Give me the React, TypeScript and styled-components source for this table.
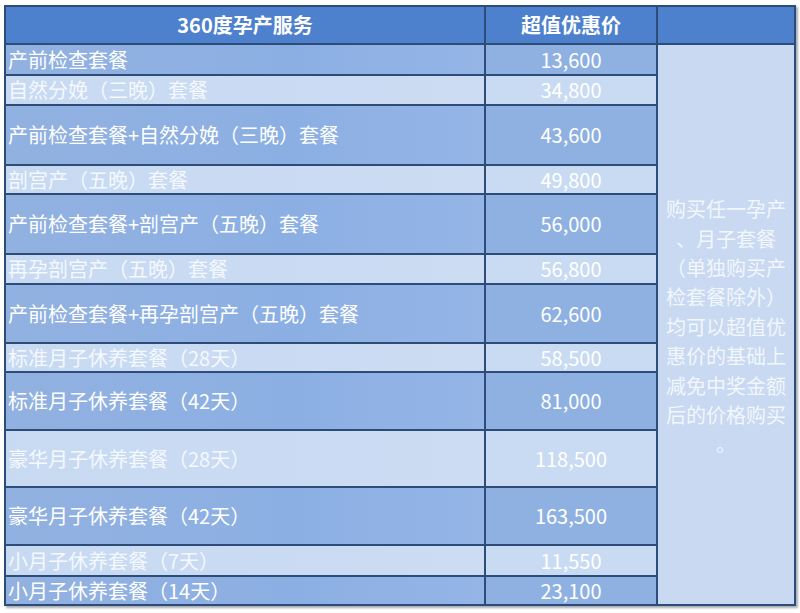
import React from "react";
import styled, { createGlobalStyle } from "styled-components";

const GlobalStyle = createGlobalStyle`
  html, body {
    margin: 0;
    padding: 0;
    background: #ffffff;
  }
  body {
    font-family: "Noto Sans CJK SC", "Noto Sans", sans-serif;
  }
`;

const Page = styled.div`
  width: 800px;
  height: 613px;
  padding: 5px 0 0 4px;
  box-sizing: border-box;
  background: #ffffff;
`;

const Table = styled.table`
  width: 790px;
  table-layout: fixed;
  border-collapse: collapse;
  border: 2px solid #2d4c78;
  box-shadow: 2px 2px 2px rgba(60, 70, 90, 0.45);
`;

const HeadRow = styled.tr`
  height: 38px;
  background: #4d81cd;
`;

const HeadCell = styled.th`
  border: 2px solid #2d4c78;
  color: #ffffff;
  font-size: 20px;
  font-weight: 700;
  text-align: center;
  padding: 0;
  line-height: 1;
`;

const Row = styled.tr<{ $dark: boolean; $h: number }>`
  height: ${(p) => p.$h}px;
  background: ${(p) => (p.$dark ? "#8fb1e2" : "#c9dbf2")};
`;

const NameCell = styled.td<{ $dark: boolean }>`
  border: 2px solid #2d4c78;
  color: ${(p) => (p.$dark ? "#ffffff" : "#f4f8ff")};
  font-size: 20px;
  padding: 0 0 0 2px;
  white-space: nowrap;
  line-height: 1;
  background: ${(p) =>
    p.$dark
      ? "linear-gradient(90deg, #91b1e0 0%, #8cafe3 60%, #94b5e6 100%)"
      : "linear-gradient(90deg, #c8daf2 0%, #cbdcf3 100%)"};
`;

const PriceCell = styled.td`
  border: 2px solid #2d4c78;
  color: #ffffff;
  font-size: 20px;
  text-align: center;
  padding: 0;
  line-height: 1;
`;

const NoteCell = styled.td`
  border: 2px solid #2d4c78;
  background: #c8d9f1;
  color: #f2f6fd;
  font-size: 20px;
  text-align: center;
  vertical-align: middle;
  padding: 4px 0 0 0;
`;

const NoteLine = styled.div`
  line-height: 29.4px;
  white-space: nowrap;
`;

const rows = [
  { name: "产前检查套餐", price: "13,600", h: 31 },
  { name: "自然分娩（三晚）套餐", price: "34,800", h: 30 },
  { name: "产前检查套餐+自然分娩（三晚）套餐", price: "43,600", h: 60 },
  { name: "剖宫产（五晚）套餐", price: "49,800", h: 29 },
  { name: "产前检查套餐+剖宫产（五晚）套餐", price: "56,000", h: 60 },
  { name: "再孕剖宫产（五晚）套餐", price: "56,800", h: 30 },
  { name: "产前检查套餐+再孕剖宫产（五晚）套餐", price: "62,600", h: 59 },
  { name: "标准月子休养套餐（28天）", price: "58,500", h: 29 },
  { name: "标准月子休养套餐（42天）", price: "81,000", h: 58 },
  { name: "豪华月子休养套餐（28天）", price: "118,500", h: 57 },
  { name: "豪华月子休养套餐（42天）", price: "163,500", h: 58 },
  { name: "小月子休养套餐（7天）", price: "11,550", h: 31 },
  { name: "小月子休养套餐（14天）", price: "23,100", h: 29 },
];

const noteLines = [
  "购买任一孕产",
  "、月子套餐",
  "（单独购买产",
  "检套餐除外）",
  "均可以超值优",
  "惠价的基础上",
  "减免中奖金额",
  "后的价格购买",
  "。",
];

export default function App() {
  return (
    <Page>
      <GlobalStyle />
      <Table>
        <colgroup>
          <col style={{ width: 480 }} />
          <col style={{ width: 172 }} />
          <col style={{ width: 138 }} />
        </colgroup>
        <thead>
          <HeadRow>
            <HeadCell>360度孕产服务</HeadCell>
            <HeadCell>超值优惠价</HeadCell>
            <HeadCell />
          </HeadRow>
        </thead>
        <tbody>
          {rows.map((r, i) => {
            const dark = i % 2 === 0;
            return (
              <Row key={r.name} $dark={dark} $h={r.h}>
                <NameCell $dark={dark}>{r.name}</NameCell>
                <PriceCell>{r.price}</PriceCell>
                {i === 0 && (
                  <NoteCell rowSpan={rows.length}>
                    {noteLines.map((l) => (
                      <NoteLine key={l}>{l}</NoteLine>
                    ))}
                  </NoteCell>
                )}
              </Row>
            );
          })}
        </tbody>
      </Table>
    </Page>
  );
}
